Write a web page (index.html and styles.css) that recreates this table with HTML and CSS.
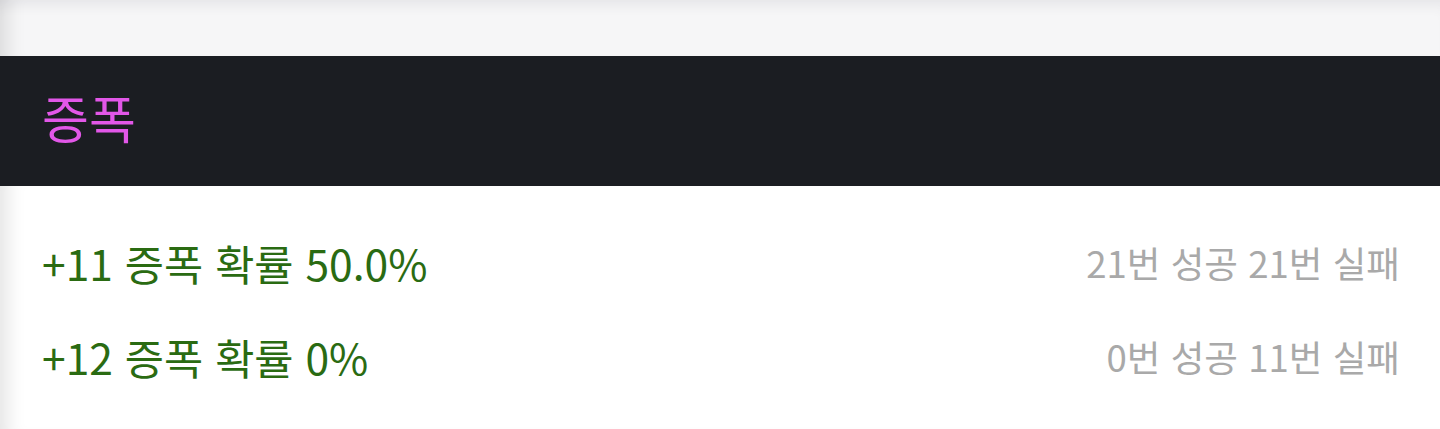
FILE: index.html
```html
<!DOCTYPE html>
<html lang="ko">
<head>
    <meta charset="UTF-8">
    <meta name="viewport" content="width=device-width, initial-scale=1.0">
    <title>증폭</title>
    <link rel="stylesheet" href="styles.css">
</head>
<body>
    <div class="topbar"></div>

    <div class="section-header">
        <h2>증폭</h2>
    </div>

    <ul class="rate-list">
        <li class="rate-row">
            <span class="rate-label">+11 증폭 확률 50.0%</span>
            <span class="rate-count">21번 성공 21번 실패</span>
        </li>
        <li class="rate-row">
            <span class="rate-label">+12 증폭 확률 0%</span>
            <span class="rate-count">0번 성공 11번 실패</span>
        </li>
    </ul>
</body>
</html>
```

FILE: styles.css
```css
* {
    margin: 0;
    padding: 0;
    box-sizing: border-box;
}

body {
    font-family: "Noto Sans CJK KR", "Noto Sans", sans-serif;
    background: #fff;
    min-height: 100vh;
}

.topbar {
    height: 56px;
    background: #f6f6f7;
    box-shadow: inset 0 14px 12px -8px rgba(60, 60, 90, 0.08),
                inset 22px 0 18px -14px rgba(0, 0, 0, 0.1);
}

.section-header {
    height: 130px;
    background: #1b1d22;
    display: flex;
    align-items: center;
    padding-left: 42px;
    padding-bottom: 8px;
}

.section-header h2 {
    font-size: 51px;
    font-weight: 400;
    color: #e257e8;
    line-height: 1;
}

.rate-list {
    list-style: none;
    padding: 29px 40px 0 42px;
    min-height: 243px;
    box-shadow: inset 22px 0 18px -14px rgba(0, 0, 0, 0.1);
}

.rate-row {
    display: flex;
    justify-content: space-between;
    align-items: center;
    height: 94px;
}

.rate-label {
    font-size: 42.6px;
    color: #2a6b12;
}

.rate-count {
    font-size: 36.6px;
    color: #a9a9a9;
}
```
